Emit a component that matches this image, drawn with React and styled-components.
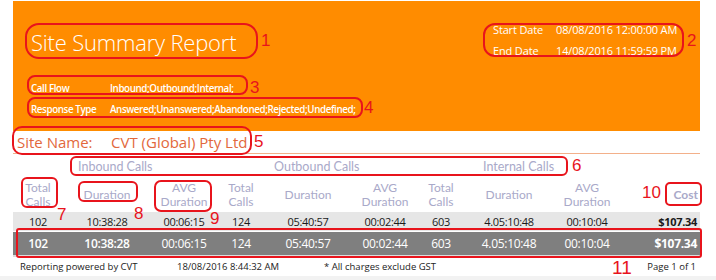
import React from 'react';
import styled, { createGlobalStyle } from 'styled-components';

const Global = createGlobalStyle`
  body {
    margin: 0;
    background: #fff;
    font-family: 'Open Sans', 'Liberation Sans', sans-serif;
  }
`;

const Page = styled.div`
  position: relative;
  width: 716px;
  height: 280px;
  overflow: hidden;
  background: #fff;
`;

const Report = styled.div`
  margin-left: 13px;
  width: 687px;
  padding-top: 1px;
`;

const Header = styled.div`
  height: 130px;
  background: #ff8c00;
  display: grid;
  grid-template-columns: 480px 1fr;
  color: #fff;
`;

const HeaderLeft = styled.div`
  padding-left: 18px;
`;

const Title = styled.div`
  margin-top: 25px;
  height: 32px;
  line-height: 32px;
  font-size: 22px;
  font-weight: 300;
  letter-spacing: -0.2px;
`;

const Filters = styled.div`
  margin-top: 20px;
`;

const FilterRow = styled.div`
  display: grid;
  grid-template-columns: 79px auto;
  height: 21px;
  line-height: 21px;
  font-size: 9.8px;
  font-weight: 600;
  letter-spacing: -0.4px;
`;

const Dates = styled.div`
  padding-top: 18px;
`;

const DateRow = styled.div`
  display: grid;
  grid-template-columns: 63px auto;
  height: 21px;
  line-height: 21px;
  font-size: 11px;
  letter-spacing: -0.15px;
`;

const SiteRow = styled.div`
  height: 22px;
  display: flex;
  align-items: center;
  padding-left: 4px;
  border-bottom: 1px solid #f3b08a;
  color: #e2683c;
  font-size: 15px;
`;

const SiteLabel = styled.span`
  width: 94px;
`;

const cols = '50px 88px 66px 48px 86px 68px 44px 92px 64px 81px';

const GroupRow = styled.div`
  display: grid;
  grid-template-columns: ${cols};
  height: 24px;
  align-items: center;
  color: #a9a9c9;
  font-family: 'Lato', sans-serif;
  font-size: 12.5px;
`;

const Group = styled.div`
  grid-column: ${p => p.$start} / span 3;
  padding-left: ${p => p.$pad}px;
`;

const HeadRow = styled.div`
  display: grid;
  grid-template-columns: ${cols};
  height: 34px;
  align-items: center;
  color: #a9a9c9;
  font-family: 'Lato', sans-serif;
  font-size: 12px;
  line-height: 14px;
`;

const Head = styled.div`
  text-align: ${p => (p.$right ? 'right' : 'center')};
  padding-right: ${p => (p.$right ? 2 : 0)}px;
  font-weight: ${p => (p.$bold ? 700 : 400)};
`;

const DataRow = styled.div`
  display: grid;
  grid-template-columns: ${cols};
  align-items: center;
  height: ${p => (p.$total ? 23 : 19)}px;
  margin-top: ${p => (p.$total ? 1 : 0)}px;
  background: ${p => (p.$total ? '#7f7f7f' : '#e6e6e6')};
  color: ${p => (p.$total ? '#fff' : '#1a1a1a')};
  font-size: ${p => (p.$total ? 12 : 11)}px;
  letter-spacing: -0.3px;
  border-bottom: ${p => (p.$total ? '2px solid #dcdcdc' : 'none')};
`;

const Cell = styled.div`
  text-align: ${p => (p.$right ? 'right' : 'center')};
  padding-right: ${p => (p.$right ? 3 : 0)}px;
  font-weight: ${p => p.$weight || 400};
`;

const Footer = styled.div`
  display: grid;
  grid-template-columns: 157px 147px 1fr auto;
  padding: 0 4px 0 7px;
  height: 18px;
  align-items: center;
  font-size: 9.5px;
  color: #222;
`;

const BottomStrip = styled.div`
  position: absolute;
  left: 0;
  right: 0;
  bottom: 0;
  height: 4px;
  background: #f2f2f2;
`;

const AnnoBox = styled.div`
  position: absolute;
  left: ${p => p.$x}px;
  top: ${p => p.$y}px;
  width: ${p => p.$w}px;
  height: ${p => p.$h}px;
  border: 2px solid #e8141c;
  border-radius: ${p => p.$r}px;
  box-sizing: border-box;
`;

const AnnoNum = styled.div`
  position: absolute;
  left: ${p => p.$x}px;
  top: ${p => p.$y}px;
  color: #e8141c;
  font-family: 'Liberation Sans', sans-serif;
  font-size: ${p => p.$size || 17}px;
  line-height: 1;
`;

const notes = [
  { n: '1', box: [25, 23, 233, 36, 14], at: [261, 32] },
  { n: '2', box: [483, 23, 201, 34, 12], at: [687, 32] },
  { n: '3', box: [27, 75, 221, 20, 8], at: [250, 79] },
  { n: '4', box: [27, 97, 336, 21, 8], at: [364, 99] },
  { n: '5', box: [12, 126, 240, 29, 10], at: [254, 133] },
  { n: '6', box: [70, 156, 498, 20, 6], at: [572, 157] },
  { n: '7', box: [21, 177, 37, 31, 6], at: [57, 206] },
  { n: '8', box: [78, 181, 60, 21, 6], at: [134, 205] },
  { n: '9', box: [154, 180, 58, 32, 7], at: [210, 210] },
  { n: '10', box: [665, 182, 37, 24, 5], at: [642, 184] },
  { n: '11', box: [16, 228, 686, 30, 3], at: [612, 258], size: 19 },
];

const heads = [
  'Total\nCalls', 'Duration', 'AVG\nDuration',
  'Total\nCalls', 'Duration', 'AVG\nDuration',
  'Total\nCalls', 'Duration', 'AVG\nDuration',
];

const values = ['102', '10:38:28', '00:06:15', '124', '05:40:57', '00:02:44', '603', '4.05:10:48', '00:10:04'];

const lines = text => text.split('\n').map((l, i) => <div key={i}>{l}</div>);

export default function App() {
  return (
    <Page>
      <Global />
      <Report>
        <Header>
          <HeaderLeft>
            <Title>Site Summary Report</Title>
            <Filters>
              <FilterRow>
                <span>Call Flow</span>
                <span>Inbound;Outbound;Internal;</span>
              </FilterRow>
              <FilterRow>
                <span>Response Type</span>
                <span>Answered;Unanswered;Abandoned;Rejected;Undefined;</span>
              </FilterRow>
            </Filters>
          </HeaderLeft>
          <Dates>
            <DateRow>
              <span>Start Date</span>
              <span>08/08/2016 12:00:00 AM</span>
            </DateRow>
            <DateRow>
              <span>End Date</span>
              <span>14/08/2016 11:59:59 PM</span>
            </DateRow>
          </Dates>
        </Header>

        <SiteRow>
          <SiteLabel>Site Name:</SiteLabel>
          <span>CVT (Global) Pty Ltd</span>
        </SiteRow>

        <GroupRow>
          <Group $start={2} $pad={15}>Inbound Calls</Group>
          <Group $start={5} $pad={9}>Outbound Calls</Group>
          <Group $start={8} $pad={20}>Internal Calls</Group>
        </GroupRow>

        <HeadRow>
          {heads.map((h, i) => (
            <Head key={i}>{lines(h)}</Head>
          ))}
          <Head $right $bold>Cost</Head>
        </HeadRow>

        <DataRow>
          {values.map((v, i) => (
            <Cell key={i}>{v}</Cell>
          ))}
          <Cell $right $weight={700}>$107.34</Cell>
        </DataRow>
        <DataRow $total>
          {values.map((v, i) => (
            <Cell key={i} $weight={i < 2 ? 600 : 400}>{v}</Cell>
          ))}
          <Cell $right $weight={700}>$107.34</Cell>
        </DataRow>

        <Footer>
          <span>Reporting powered by CVT</span>
          <span>18/08/2016 8:44:32 AM</span>
          <span>* All charges exclude GST</span>
          <span>Page 1 of 1</span>
        </Footer>
      </Report>
      <BottomStrip />

      {notes.map(a => (
        <React.Fragment key={a.n}>
          <AnnoBox $x={a.box[0]} $y={a.box[1]} $w={a.box[2]} $h={a.box[3]} $r={a.box[4]} />
          <AnnoNum $x={a.at[0]} $y={a.at[1]} $size={a.size}>{a.n}</AnnoNum>
        </React.Fragment>
      ))}
    </Page>
  );
}
